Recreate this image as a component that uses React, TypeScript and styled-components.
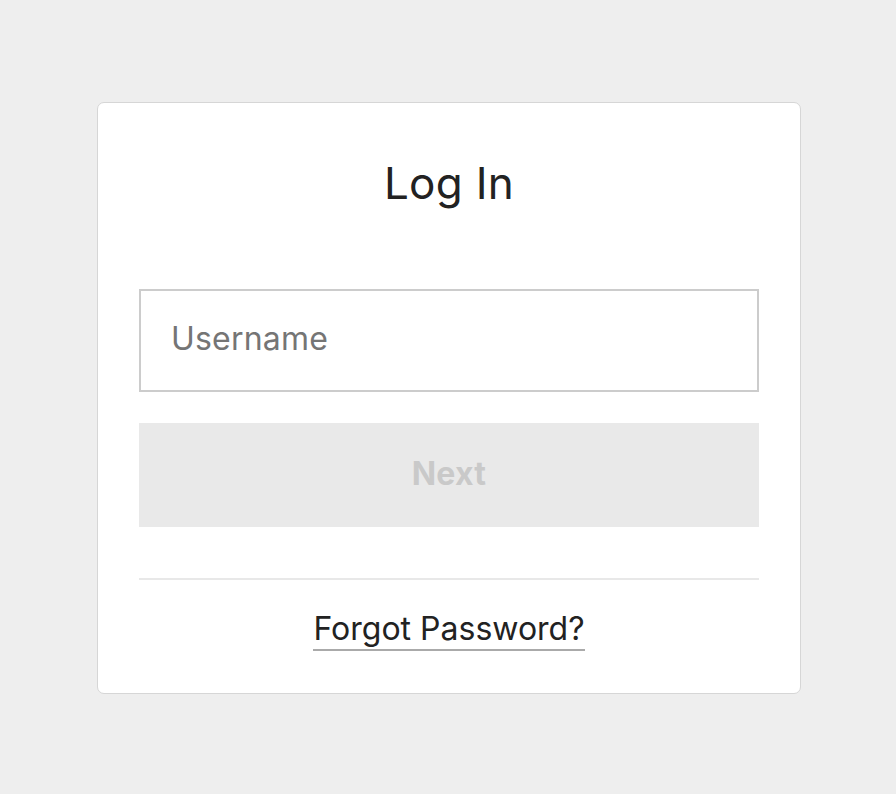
import React from "react";
import styled, { createGlobalStyle } from "styled-components";

const Global = createGlobalStyle`
  html, body { margin: 0; padding: 0; }
  body {
    background: #eeeeee;
    font-family: Inter, "Liberation Sans", sans-serif;
    color: #222222;
  }
  * { box-sizing: border-box; }
`;

const Page = styled.main`
  min-height: 100vh;
  padding: 2px 0 0 2px;
  display: flex;
  align-items: center;
  justify-content: center;
`;

const Card = styled.section`
  width: 704px;
  height: 592px;
  background: #ffffff;
  border: 1px solid #d6d6d6;
  border-radius: 7px;
  padding: 50px 41px 0;
  display: flex;
  flex-direction: column;
`;

const Title = styled.h1`
  margin: 0;
  height: 60px;
  line-height: 60px;
  text-align: center;
  font-weight: 400;
  font-size: 44px;
  color: #222222;
  letter-spacing: 0.3px;
`;

const Input = styled.input`
  margin-top: 76px;
  width: 100%;
  height: 103px;
  border: 2px solid #cccccc;
  border-radius: 0;
  padding: 0 30px 4px;
  font-family: inherit;
  font-size: 32px;
  letter-spacing: 0.2px;
  color: #222;
  outline: none;
  background: #fff;
  &::placeholder { color: #757575; }
`;

const Button = styled.button`
  margin-top: 31px;
  width: 100%;
  height: 104px;
  border: none;
  background: #e9e9e9;
  color: #c9c9c9;
  font-family: inherit;
  font-size: 32px;
  font-weight: 700;
  padding: 0 0 4px;
  letter-spacing: 0.3px;
  cursor: default;
`;

const Divider = styled.hr`
  margin: 51px 0 0;
  border: none;
  height: 2px;
  background: #e8e8e8;
`;

const Footer = styled.div`
  display: flex;
  justify-content: center;
  padding-top: 29px;
`;

const Link = styled.a`
  font-size: 32px;
  line-height: 40px;
  color: #222222;
  text-decoration: none;
  border-bottom: 2px solid #aaaaaa;
  padding-bottom: 0;
`;

export default function App() {
  return (
    <>
      <Global />
      <Page>
        <Card>
          <Title>Log In</Title>
          <Input placeholder="Username" />
          <Button disabled>Next</Button>
          <Divider />
          <Footer>
            <Link href="#">Forgot Password?</Link>
          </Footer>
        </Card>
      </Page>
    </>
  );
}
